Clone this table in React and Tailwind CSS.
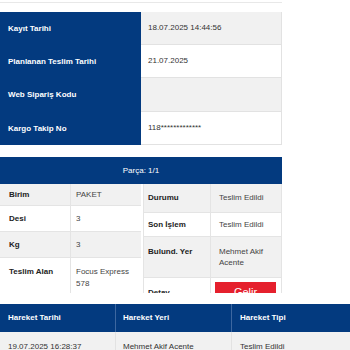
import React from "react";

const topRows = [
  ["Kayıt Tarihi", "18.07.2025 14:44:56", "h-[33px]", true],
  ["Planlanan Teslim Tarihi", "21.07.2025", "h-[33px]", false],
  ["Web Sipariş Kodu", "", "h-[34px]", true],
  ["Kargo Takip No", "118*************", "h-[33px]", false],
];

const leftRows = [
  ["Birim", ["PAKET"], "h-[22px]", true],
  ["Desi", ["3"], "h-[26px]", false],
  ["Kg", ["3"], "h-[26px]", true],
  ["Teslim Alan", ["Focus Express", "578"], "h-[36px]", false],
];

const rightRows = [
  ["Durumu", ["Teslim Edildi"], "h-[29px]", true],
  ["Son İşlem", ["Teslim Edildi"], "h-[24px]", false],
  ["Bulund. Yer", ["Mehmet Akif", "Acente"], "h-[41px]", true],
];

export default function App() {
  return (
    <div className="w-[350px] h-[350px] overflow-hidden bg-white font-['Liberation_Sans',Arial,sans-serif] text-[8px] leading-[11.5px] text-[#333]">
      <div className="h-[3px] w-[282px] border-b border-[#e8e8e8]" />

      {/* top info table */}
      <div className="mt-[9px] w-[282px] flex flex-col">
        {topRows.map(([l, v, h, gray]) => (
          <div key={l} className={`flex shrink-0 ${h}`}>
            <div className="w-[141px] bg-[#033a7f] text-white font-bold pl-[8px] flex items-center">
              {l}
            </div>
            <div
              className={`flex-1 pl-[7px] flex items-center border-r border-b border-[#e2e2e2] ${
                gray ? "bg-[#f1f1f1]" : "bg-white"
              }`}
            >
              {v}
            </div>
          </div>
        ))}
      </div>

      {/* Parça */}
      <div className="mt-[12px] w-[282px]">
        <div className="h-[27px] bg-[#033a7f] text-white flex items-center justify-center">
          Parça: 1/1
        </div>
        <div className="h-[109px] overflow-hidden flex">
          <div className="w-[141px] flex flex-col">
            {leftRows.map(([l, v, h, gray]) => (
              <div
                key={l}
                className={`flex shrink-0 ${h} border-b border-[#e4e4e4] ${
                  gray ? "bg-[#f1f1f1]" : "bg-white"
                }`}
              >
                <div
                  className={`w-[71px] pl-[9px] font-bold text-[#222] flex border-r border-[#e4e4e4] ${
                    v.length > 1 ? "items-start pt-[8px]" : "items-center"
                  }`}
                >
                  {l}
                </div>
                <div
                  className={`flex-1 pl-[5px] flex flex-col text-[#444] ${
                    v.length > 1 ? "justify-start pt-[8px]" : "justify-center"
                  }`}
                >
                  {v.map((t) => (
                    <div key={t}>{t}</div>
                  ))}
                </div>
              </div>
            ))}
          </div>
          <div className="ml-[2px] flex-1 flex flex-col border-l border-r border-[#e4e4e4]">
            {rightRows.map(([l, v, h, gray]) => (
              <div
                key={l}
                className={`flex shrink-0 ${h} border-b border-[#e4e4e4] ${
                  gray ? "bg-[#f1f1f1]" : "bg-white"
                }`}
              >
                <div
                  className={`w-[67px] pl-[4px] font-bold text-[#222] flex border-r border-[#e4e4e4] ${
                    v.length > 1 ? "items-start pt-[9px]" : "items-center"
                  }`}
                >
                  {l}
                </div>
                <div className="flex-1 pl-[8px] flex flex-col justify-center text-[#444]">
                  {v.map((t) => (
                    <div key={t}>{t}</div>
                  ))}
                </div>
              </div>
            ))}
            <div className="flex shrink-0 h-[30px] bg-white">
              <div className="w-[67px] pl-[4px] pt-[9px] font-bold text-[#222] border-r border-[#e4e4e4]">
                Detay
              </div>
              <div className="flex-1 pl-[4px] pt-[4px]">
                <div className="w-[61px] h-[20px] bg-[#e5202d] text-white text-[11px] leading-[20px] text-center">
                  Gelir
                </div>
              </div>
            </div>
          </div>
        </div>
      </div>

      {/* Hareket table */}
      <div className="mt-[11px] w-[350px]">
        <div className="h-[28px] flex bg-[#033a7f] text-white font-bold">
          <div className="w-[116px] pl-[8px] flex items-center border-r border-[#3d67a0]">Hareket Tarihi</div>
          <div className="w-[116px] pl-[7px] flex items-center border-r border-[#3d67a0]">Hareket Yeri</div>
          <div className="flex-1 pl-[8px] flex items-center">Hareket Tipi</div>
        </div>
        <div className="h-[30px] flex bg-[#f1f1f1] text-[#333]">
          <div className="w-[116px] pl-[8px] flex items-center border-r border-[#e2e2e2]">19.07.2025 16:28:37</div>
          <div className="w-[116px] pl-[7px] flex items-center border-r border-[#e2e2e2]">Mehmet Akif Acente</div>
          <div className="flex-1 pl-[8px] flex items-center">Teslim Edildi</div>
        </div>
      </div>
    </div>
  );
}
